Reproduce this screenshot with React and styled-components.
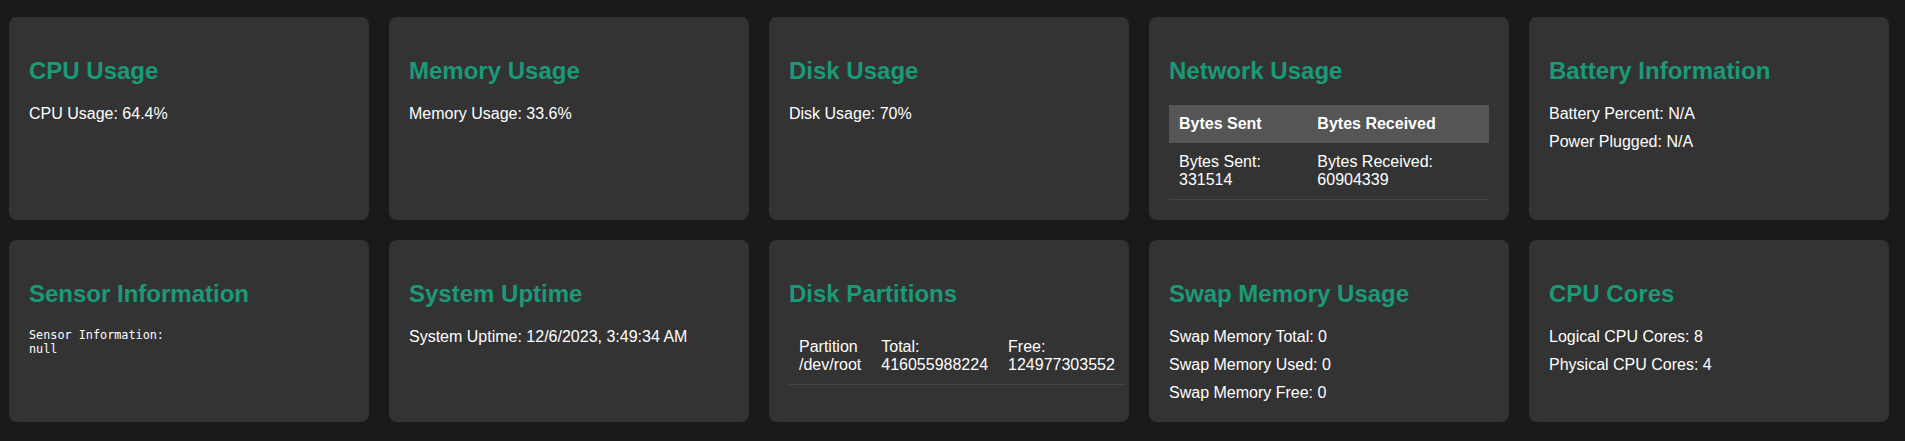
import React from "react";
import styled, { createGlobalStyle } from "styled-components";

const GlobalStyle = createGlobalStyle`
  html, body {
    margin: 0;
    padding: 0;
    background: #1a1a1a;
    color: #ffffff;
    font-family: "Liberation Sans", Arial, sans-serif;
  }
`;

const Dashboard = styled.div`
  display: grid;
  grid-template-columns: repeat(5, 1fr);
  gap: 20px;
  padding: 17px 16px 18px 9px;
`;

const Card = styled.section`
  background: #333333;
  border-radius: 8px;
  padding: 20px;
  min-width: 0;
`;

const Title = styled.h2`
  font-size: 24px;
  font-weight: bold;
  color: #1a9a78;
  margin: 19.92px 0;
`;

const Line = styled.p`
  font-size: 16px;
  margin: 10px 0 0;
`;

const Pre = styled.pre`
  font-family: "DejaVu Sans Mono", "Liberation Mono", monospace;
  font-size: 11.8px;
  line-height: 14.7px;
  margin: 0;
`;

const Table = styled.table`
  width: 100%;
  border-collapse: collapse;
  font-size: 16px;
`;

const Th = styled.th`
  background: #555555;
  text-align: left;
  padding: 10px;
  font-weight: bold;
`;

const Td = styled.td`
  text-align: left;
  padding: 10px;
  border-bottom: 1px solid #444444;
`;

export default function App() {
  return (
    <>
      <GlobalStyle />
      <Dashboard>
        <Card>
          <Title>CPU Usage</Title>
          <Line>CPU Usage: 64.4%</Line>
        </Card>
        <Card>
          <Title>Memory Usage</Title>
          <Line>Memory Usage: 33.6%</Line>
        </Card>
        <Card>
          <Title>Disk Usage</Title>
          <Line>Disk Usage: 70%</Line>
        </Card>
        <Card>
          <Title>Network Usage</Title>
          <Table>
            <thead>
              <tr>
                <Th>Bytes Sent</Th>
                <Th>Bytes Received</Th>
              </tr>
            </thead>
            <tbody>
              <tr>
                <Td>Bytes Sent: 331514</Td>
                <Td>Bytes Received: 60904339</Td>
              </tr>
            </tbody>
          </Table>
        </Card>
        <Card>
          <Title>Battery Information</Title>
          <Line>Battery Percent: N/A</Line>
          <Line>Power Plugged: N/A</Line>
        </Card>
        <Card>
          <Title>Sensor Information</Title>
          <Pre>{"Sensor Information:\nnull"}</Pre>
        </Card>
        <Card>
          <Title>System Uptime</Title>
          <Line>System Uptime: 12/6/2023, 3:49:34 AM</Line>
        </Card>
        <Card>
          <Title>Disk Partitions</Title>
          <Table>
            <tbody>
              <tr>
                <Td>Partition /dev/root</Td>
                <Td>Total: 416055988224</Td>
                <Td>Free: 124977303552</Td>
              </tr>
            </tbody>
          </Table>
        </Card>
        <Card>
          <Title>Swap Memory Usage</Title>
          <Line>Swap Memory Total: 0</Line>
          <Line>Swap Memory Used: 0</Line>
          <Line>Swap Memory Free: 0</Line>
        </Card>
        <Card>
          <Title>CPU Cores</Title>
          <Line>Logical CPU Cores: 8</Line>
          <Line>Physical CPU Cores: 4</Line>
        </Card>
      </Dashboard>
    </>
  );
}
